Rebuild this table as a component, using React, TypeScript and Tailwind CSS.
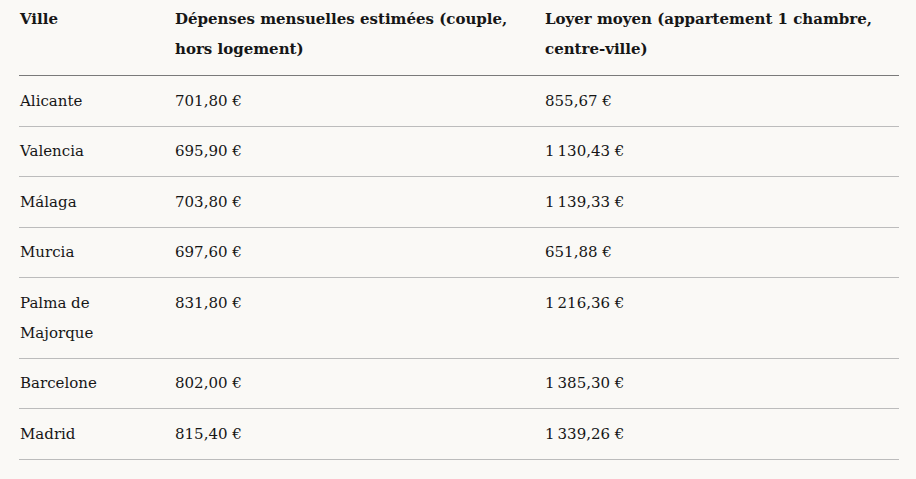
import React from "react";

const ROWS = [
    { city: "Alicante", spend: "701,80 €", rent: "855,67 €" },
    { city: "Valencia", spend: "695,90 €", rent: "1\u202F130,43 €" },
    { city: "Málaga", spend: "703,80 €", rent: "1\u202F139,33 €" },
    { city: "Murcia", spend: "697,60 €", rent: "651,88 €" },
    { city: "Palma de Majorque", spend: "831,80 €", rent: "1\u202F216,36 €" },
    { city: "Barcelone", spend: "802,00 €", rent: "1\u202F385,30 €" },
    { city: "Madrid", spend: "815,40 €", rent: "1\u202F339,26 €" },
];

const App = () => {
    return (
        <div className="min-h-screen w-full bg-[#faf9f6] pl-[19px] text-[#161616] font-['DejaVu_Serif',serif]">
            <table className="w-[880px] table-fixed border-collapse text-[15px] leading-[30px]">
                <colgroup>
                    <col className="w-[155px]" />
                    <col className="w-[370px]" />
                    <col className="w-[355px]" />
                </colgroup>
                <thead>
                    <tr className="border-b border-[#7a7a7a]">
                        <th className="pl-px pr-4 pt-[4px] pb-[11px] text-left align-top font-bold">Ville</th>
                        <th className="pl-px pr-4 pt-[4px] pb-[11px] text-left align-top font-bold">
                            Dépenses mensuelles estimées (couple, hors logement)
                        </th>
                        <th className="pl-px pr-4 pt-[4px] pb-[11px] text-left align-top font-bold">
                            Loyer moyen (appartement 1 chambre, centre-ville)
                        </th>
                    </tr>
                </thead>
                <tbody>
                    {ROWS.map((row, idx) => {
                        return (
                            <tr key={idx} className="border-b border-[#bcbcbc]">
                                <td className="pl-px pr-4 py-[9.75px] align-top">{row.city}</td>
                                <td className="pl-px pr-4 py-[9.75px] align-top">{row.spend}</td>
                                <td className="pl-px pr-4 py-[9.75px] align-top">{row.rent}</td>
                            </tr>
                        )
                    })}
                </tbody>
            </table>
        </div>
    )
};

export default App;
